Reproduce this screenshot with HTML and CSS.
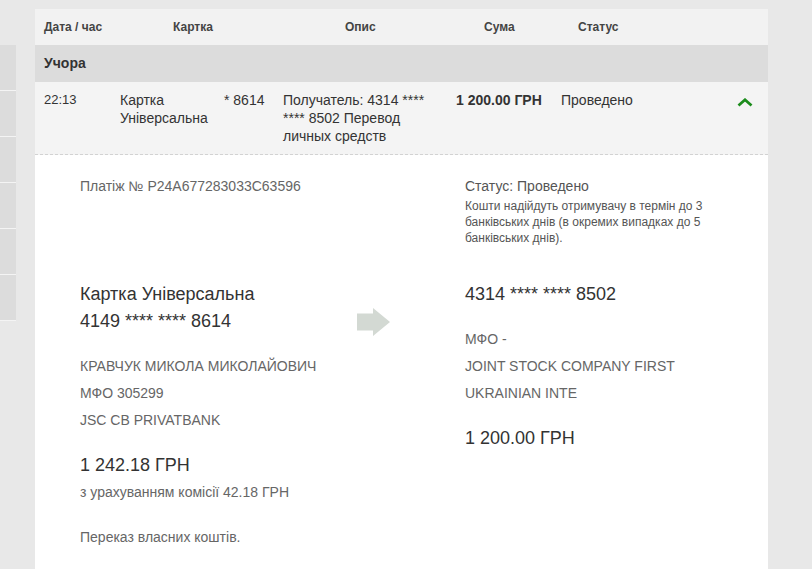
FILE: index.html
```html
<!DOCTYPE html>
<html lang="uk">
<head>
<meta charset="utf-8">
<title>Платежі</title>
<link rel="stylesheet" href="styles.css">
</head>
<body>
<div class="page">
  <nav class="side">
    <div class="side-item"></div>
    <div class="side-item"></div>
    <div class="side-item"></div>
    <div class="side-item"></div>
    <div class="side-item"></div>
    <div class="side-item"></div>
  </nav>
  <main class="panel">
    <div class="thead">
      <div>Дата / час</div>
      <div>Картка</div>
      <div>Опис</div>
      <div>Сума</div>
      <div>Статус</div>
    </div>
    <div class="group">Учора</div>
    <div class="row">
      <div class="time">22:13</div>
      <div class="card">Картка Універсальна</div>
      <div class="num">* 8614</div>
      <div class="desc">Получатель: 4314 **** **** 8502 Перевод личных средств</div>
      <div class="sum">1 200.00 ГРН</div>
      <div class="status">Проведено</div>
      <div class="toggle">
        <svg width="16" height="9" viewBox="0 0 16 9"><polyline points="1.5,7.5 8,1.8 14.5,7.5" fill="none" stroke="#1c8c1c" stroke-width="2.8"/></svg>
      </div>
    </div>
    <section class="detail">
      <div class="pay-no">Платіж № P24A677283033C63596</div>
      <div class="status-box">
        <div class="status-title">Статус: Проведено</div>
        <div class="status-note">Кошти надійдуть отримувачу в термін до 3 банківських днів (в окремих випадках до 5 банківських днів).</div>
      </div>
      <div class="col">
        <div class="from">
          <div class="big">
            <div>Картка Універсальна</div>
            <div>4149 **** **** 8614</div>
          </div>
          <svg class="arrow" width="34" height="28" viewBox="0 0 34 28"><polygon points="0,5.5 16,5.5 16,0 33,14 16,28 16,22.5 0,22.5" fill="#d3d9d3"/></svg>
        </div>
        <div class="info">
          <div>КРАВЧУК МИКОЛА МИКОЛАЙОВИЧ</div>
          <div>МФО 305299</div>
          <div>JSC CB PRIVATBANK</div>
        </div>
        <div class="info">
          <div class="big">1 242.18 ГРН</div>
          <div>з урахуванням комісії 42.18 ГРН</div>
        </div>
        <div class="info">
          <div>Переказ власних коштів.</div>
        </div>
      </div>
      <div class="col">
        <div class="big">4314 **** **** 8502</div>
        <div class="info narrow">
          <div>МФО -</div>
          <div>JOINT STOCK COMPANY FIRST UKRAINIAN INTE</div>
        </div>
        <div class="info">
          <div class="big">1 200.00 ГРН</div>
        </div>
      </div>
    </section>
  </main>
</div>
</body>
</html>
```

FILE: styles.css
```css
html, body {
  margin: 0;
  padding: 0;
}
body {
  background: #e8e8e8;
  font-family: Arial, "Liberation Sans", sans-serif;
  color: #333;
  height: 569px;
  overflow: hidden;
}
.page {
  display: flex;
  align-items: flex-start;
  gap: 19px;
}
.side {
  width: 16px;
  margin-top: 45px;
  display: flex;
  flex-direction: column;
}
.side-item {
  height: 45px;
  background: #dcdcdc;
  border-bottom: 1px solid #f4f4f4;
}
.panel {
  width: 733px;
  margin-top: 9px;
}
.thead {
  display: grid;
  grid-template-columns: 129px 172px 139px 94px 1fr;
  height: 36px;
  line-height: 36px;
  padding-left: 9px;
  background: #f2f2f2;
  font-size: 12px;
  font-weight: bold;
  color: #444;
}
.group {
  height: 37px;
  line-height: 37px;
  padding-left: 9px;
  background: #dcdcdc;
  font-size: 14px;
  font-weight: bold;
  color: #333;
}
.row {
  display: grid;
  grid-template-columns: 76px 104px 59px 173px 105px 1fr 16px;
  padding: 9px 15px 9px 9px;
  background: #f4f4f4;
  border-bottom: 1px dashed #d2d2d2;
  font-size: 14px;
  line-height: 18px;
  color: #333;
  height: 54px;
}
.time {
  font-size: 13px;
}
.desc {
  width: 152px;
}
.sum {
  font-weight: bold;
}
.toggle svg {
  display: block;
  margin-top: 7px;
}
.detail {
  background: #fff;
  display: grid;
  grid-template-columns: 385px 1fr;
  align-content: start;
  row-gap: 35px;
  padding: 23px 0 40px 45px;
  min-height: 400px;
}
.pay-no {
  font-size: 14px;
  line-height: 16px;
  color: #666;
}
.status-title {
  font-size: 14px;
  line-height: 16px;
  color: #555;
  margin-bottom: 4px;
}
.status-note {
  font-size: 12px;
  line-height: 16px;
  color: #555;
  width: 250px;
}
.col {
  font-size: 14px;
  line-height: 27px;
  color: #666;
}
.big {
  font-size: 18px;
  line-height: 27px;
  color: #333;
}
.from {
  display: flex;
  justify-content: space-between;
  align-items: flex-end;
  padding-right: 74px;
}
.arrow {
  display: block;
  margin-bottom: -1px;
}
.info {
  margin-top: 18px;
}
.narrow {
  width: 245px;
}
```
